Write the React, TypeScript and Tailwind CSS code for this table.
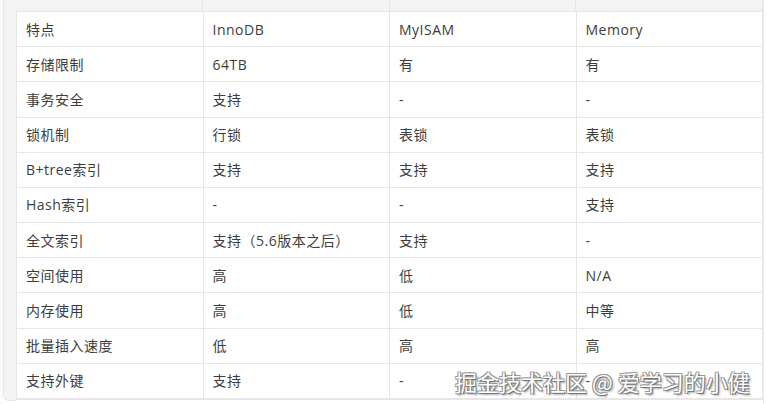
const rows: string[][] = [
  ["特点", "InnoDB", "MyISAM", "Memory"],
  ["存储限制", "64TB", "有", "有"],
  ["事务安全", "支持", "-", "-"],
  ["锁机制", "行锁", "表锁", "表锁"],
  ["B+tree索引", "支持", "支持", "支持"],
  ["Hash索引", "-", "-", "支持"],
  ["全文索引", "支持（5.6版本之后）", "支持", "-"],
  ["空间使用", "高", "低", "N/A"],
  ["内存使用", "高", "低", "中等"],
  ["批量插入速度", "低", "高", "高"],
  ["支持外键", "支持", "-", "-"],
];

export default function App() {
  return (
    <div
      className="relative flex h-[404px] w-[767px] overflow-hidden bg-white text-[14px] text-[#3d3d3d]"
      style={{ fontFamily: '"Open Sans", "Noto Sans CJK SC", sans-serif' }}
    >
      <div className="w-[3px] shrink-0 bg-[#fafafa]" />
      <div className="mb-[3px] w-[13px] shrink-0 rounded-bl-[6px] border-l border-b border-[#e6e6e6] bg-[#f3f3f3]" />

      <div className="flex w-[747px] flex-col">
        <div className="grid h-[12px] grid-cols-4 border-b border-[#e6e6e6] bg-[#f3f3f3]">
          {[0, 1, 2, 3].map((i) => (
            <div key={i} className="border-r border-[#e6e6e6]" />
          ))}
        </div>
        <div className="grid h-[388px] grid-cols-4 grid-rows-[repeat(11,1fr)] border-l border-b border-[#e6e6e6]">
          {rows.map((row, r) =>
            row.map((cell, c) => (
              <div
                key={`${r}-${c}`}
                className="flex items-center border-r border-b border-[#e6e6e6] pl-[9px] tracking-[0.5px]"
              >
                {cell}
              </div>
            ))
          )}
        </div>
      </div>

      <div className="w-[4px] shrink-0 border-l border-[#ececec]" />

      <div
        className="pointer-events-none absolute left-[455px] top-[365px] whitespace-nowrap text-[22px] text-white"
        style={{
          fontFamily: '"Noto Sans CJK SC", sans-serif',
          textShadow:
            "1px 1px 0 #777, -1px -1px 0 #999, 1px -1px 0 #999, -1px 1px 0 #999, 2px 2px 2px rgba(0,0,0,0.35)",
        }}
      >
        掘金技术社区 @ 爱学习的小健
      </div>
    </div>
  );
}
